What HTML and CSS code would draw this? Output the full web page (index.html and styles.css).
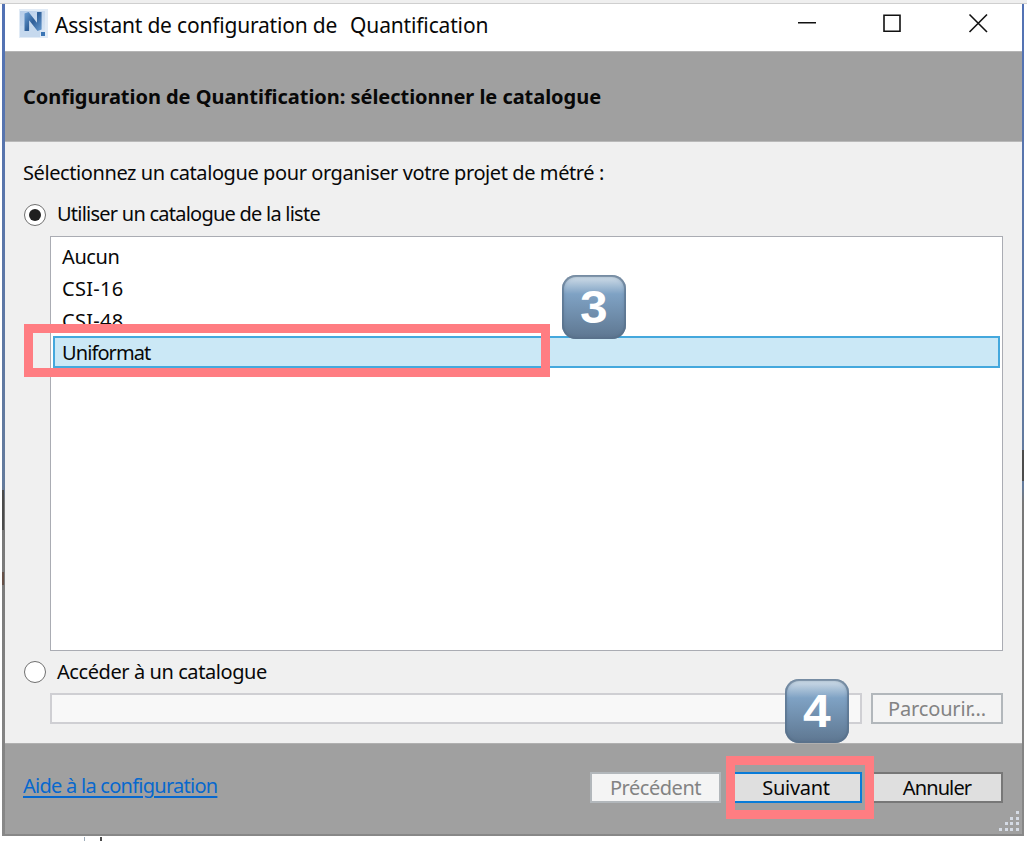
FILE: index.html
```html
<!DOCTYPE html>
<html lang="fr">
<head>
<meta charset="utf-8">
<title>Assistant de configuration de Quantification</title>
<link rel="stylesheet" href="styles.css">
</head>
<body>
<div class="desktop">
  <div class="window">
    <header class="titlebar">
      <svg class="app-icon" width="29" height="29" viewBox="0 0 29 29">
        <defs>
          <linearGradient id="tile" x1="0" y1="0" x2="1" y2="1"><stop offset="0" stop-color="#b6cce8"/><stop offset="1" stop-color="#dce8f5"/></linearGradient>
          <linearGradient id="letter" x1="0" y1="0" x2="1" y2="1"><stop offset="0" stop-color="#6294ca"/><stop offset=".5" stop-color="#2f5f98"/><stop offset="1" stop-color="#5f92c8"/></linearGradient>
        </defs>
        <path fill="#e1ebf6" d="M0 0h29v29H0z"/>
        <path fill="url(#tile)" d="M1 2h25v23H1z"/>
        <path fill="#c6d9ee" d="M1 17h20v11H1z"/>
        <path fill="none" stroke="url(#letter)" stroke-width="4.600" stroke-linejoin="bevel" d="M7.800 22V4.500L20.300 20.500V3"/>
        <path fill="#3c76b5" d="M22 23h4v4h-4z"/>
      </svg>
      <span class="title"><span class="t-a">Assistant de configuration de</span><span class="t-b">Quantification</span></span>
      <svg class="controls" width="190" height="20" viewBox="0 0 190 20" fill="none" stroke="#111" stroke-width="1.6">
        <path d="M0 9.700h18M86 2.200h16v16H86z"/>
        <path d="M171.500 1.500l17.500 17.500M189 1.500l-17.500 17.500"/>
      </svg>
    </header>
    <div class="banner"><span class="heading">Configuration de Quantification: sélectionner le catalogue</span></div>
    <main class="content">
      <p class="intro"><span class="s-intro">Sélectionnez un catalogue pour organiser votre projet de métré :</span></p>
      <label class="option first"><span class="radio on"></span><span class="s-use">Utiliser un catalogue de la liste</span></label>
      <ul class="list">
        <li><span class="s-none">Aucun</span></li>
        <li><span class="s-csi">CSI-16</span></li>
        <li><span class="s-csi">CSI-48</span></li>
        <li class="selected"><span class="s-uni">Uniformat</span></li>
      </ul>
      <label class="option second"><span class="radio"></span><span class="s-open">Accéder à un catalogue</span></label>
      <div class="browse"><div class="field"></div><div class="button disabled"><span class="s-browse">Parcourir...</span></div></div>
    </main>
    <footer class="footer">
      <a class="help">Aide à la configuration</a>
      <div class="button disabled prev"><span class="s-prev">Précédent</span></div>
      <div class="button primary"><span class="s-next">Suivant</span></div>
      <div class="button"><span class="s-cancel">Annuler</span></div>
    </footer>
    <svg class="grip" width="21" height="21" viewBox="0 0 21 21" fill="#d5dbe5">
      <path d="M17 0h3v3h-3zM17 6h3v3h-3zM11 6h3v3h-3zM17 11h3v3h-3zM11 11h3v3h-3zM6 11h3v3H6zM17 17h3v3h-3zM11 17h3v3h-3zM6 17h3v3H6zM0 17h3v3H0z"/>
    </svg>
  </div>
  <div class="edge-marks"><i class="mark m1"></i><i class="mark m2"></i><i class="mark m3"></i><i class="mark m4"></i><i class="mark m5"></i></div>
  <div class="highlight h-list"></div>
  <div class="highlight h-next"></div>
  <div class="keycap k3"><span>3</span></div>
  <div class="keycap k4"><span>4</span></div>
</div>
</body>
</html>
```
FILE: styles.css
```css
* { box-sizing: border-box; }
body { margin: 0; background: #fff; font-family: "Noto Sans", "Open Sans", sans-serif; font-size: 20px; color: #080808; overflow: hidden; }
.desktop { position: relative; width: 1027px; height: 841px; padding: 4px 4px 0 2px; overflow: hidden; background: linear-gradient(#efefef 0 3px, #cfcfcf 3px 4px, #fff 4px); }
.window { position: relative; width: 1022px; height: 832px; display: flex; flex-direction: column; border-left: 3px solid #566eaa; border-right: 2px solid #4b566a; border-bottom: 2px solid #767676; border-image: linear-gradient(#5272b5, #647b9c 58%, #777 60%, #888 100%) 1; border-top: 0; }
.titlebar { height: 48px; flex: none; display: flex; align-items: flex-start; padding: 5px 34px 0 14px; border-bottom: 1px solid #b5b5b5; background: #fff; }
.title { display: flex; gap: 13px; margin-left: 7px; height: 31px; align-items: center; font-size: 21px; white-space: nowrap; }
.t-a { letter-spacing: -.2px; }
.t-b { letter-spacing: -.15px; }
.controls { margin: 4px 0 0 auto; }
.banner { height: 90px; flex: none; display: flex; align-items: center; padding-left: 18px; background: #a0a0a0; border-bottom: 1px solid #b9b9b9; font-weight: 700; }
.heading { letter-spacing: -.04px; }
.content { height: 601px; flex: none; padding: 17px 19px 0 18px; background: #f0f0f0; display: flex; flex-direction: column; }
span { white-space: pre; }
.intro { margin: 0; height: 28px; line-height: 28px; }
.s-intro { letter-spacing: -.41px; }
.s-use { letter-spacing: -.76px; padding-bottom: 2px; }
.s-none { letter-spacing: -.4px; }
.s-csi { letter-spacing: .3px; }
.s-uni { letter-spacing: -.9px; }
.s-open { letter-spacing: -.42px; padding-bottom: 2px; }
.s-browse { letter-spacing: -.15px; }
.s-prev { letter-spacing: -.45px; }
.s-next { letter-spacing: -.3px; }
.s-cancel { letter-spacing: -.9px; }
.option { display: flex; align-items: center; gap: 11px; height: 28px; flex: none; }
.first { margin-top: 13px; }
.radio { width: 22px; height: 22px; margin-left: 1px; border: 1.5px solid #707070; border-radius: 50%; background: #fff; display: grid; place-items: center; }
.radio.on { margin-top: 1px; }
.radio.on::after { content: ""; width: 12px; height: 12px; border-radius: 50%; background: #202020; }
.list { list-style: none; margin: 8px 0 0 27px; padding: 3px 2px; width: 953px; height: 415px; flex: none; border: 1.5px solid #aaacb3; background: #fff; }
.list li { height: 32px; padding-left: 9px; display: flex; align-items: center; }
.list .selected { height: 32px; padding-left: 7px; border: 2px solid #44a8dd; background: #cbe8f6; }
.second { margin-top: 7px; }
.browse { display: flex; gap: 9px; margin: 7px 0 0 27px; }
.field { width: 812px; height: 31px; border: 2px solid #cfcfd3; background: #f8f8f8; }
.button { width: 132px; height: 31px; flex: none; display: flex; align-items: center; justify-content: center; border: 2px solid #777; background: #dfdfdf; }
.disabled { color: #838383; background: #f4f4f4; border-color: #b2b7bb; }
.primary { border-color: #087bd8; }
.footer { height: 91px; flex: none; display: flex; align-items: flex-start; gap: 9px; padding: 28px 19px 0 18px; background: #a0a0a0; border-top: 1px solid #b0b0b0; }
.help { color: #0768ce; letter-spacing: -.74px; text-decoration: underline; text-decoration-thickness: 2px; text-underline-offset: 3px; line-height: 28px; }
.prev { width: 131px; margin-left: auto; }
.grip { position: absolute; right: 2px; bottom: 2px; }
.mark { position: absolute; background: #4b4b4b; }
.m1 { left: 2px; top: 490px; width: 2px; height: 40px; }
.m2 { left: 2px; top: 572px; width: 2px; height: 13px; background: #665047; }
.m3 { left: 84px; top: 837px; width: 1px; height: 4px; background: #9cabb8; }
.m4 { left: 100px; top: 837px; width: 2px; height: 4px; }
.m5 { left: 1022px; top: 450px; width: 2px; height: 31px; }
.highlight { position: absolute; border: 9px solid #ff7d82; }
.h-list { left: 24px; top: 324px; width: 526px; height: 53px; }
.h-next { left: 726px; top: 756px; width: 148px; height: 63px; }
.keycap { position: absolute; width: 64px; height: 64px; border-radius: 14px; display: grid; place-items: center; font: 700 46px/1 "Liberation Sans", sans-serif; color: #fff; background: linear-gradient(#c9d8e5 3px, #7fa2c4 19px, #5f7892 62px); box-shadow: inset 0 0 0 2px #58708b88, inset 0 0 4px #536b84; }
.keycap span { transform: scaleX(1.08); }
.k3 { left: 562px; top: 275px; }
.k4 { left: 785px; top: 679px; }
```
